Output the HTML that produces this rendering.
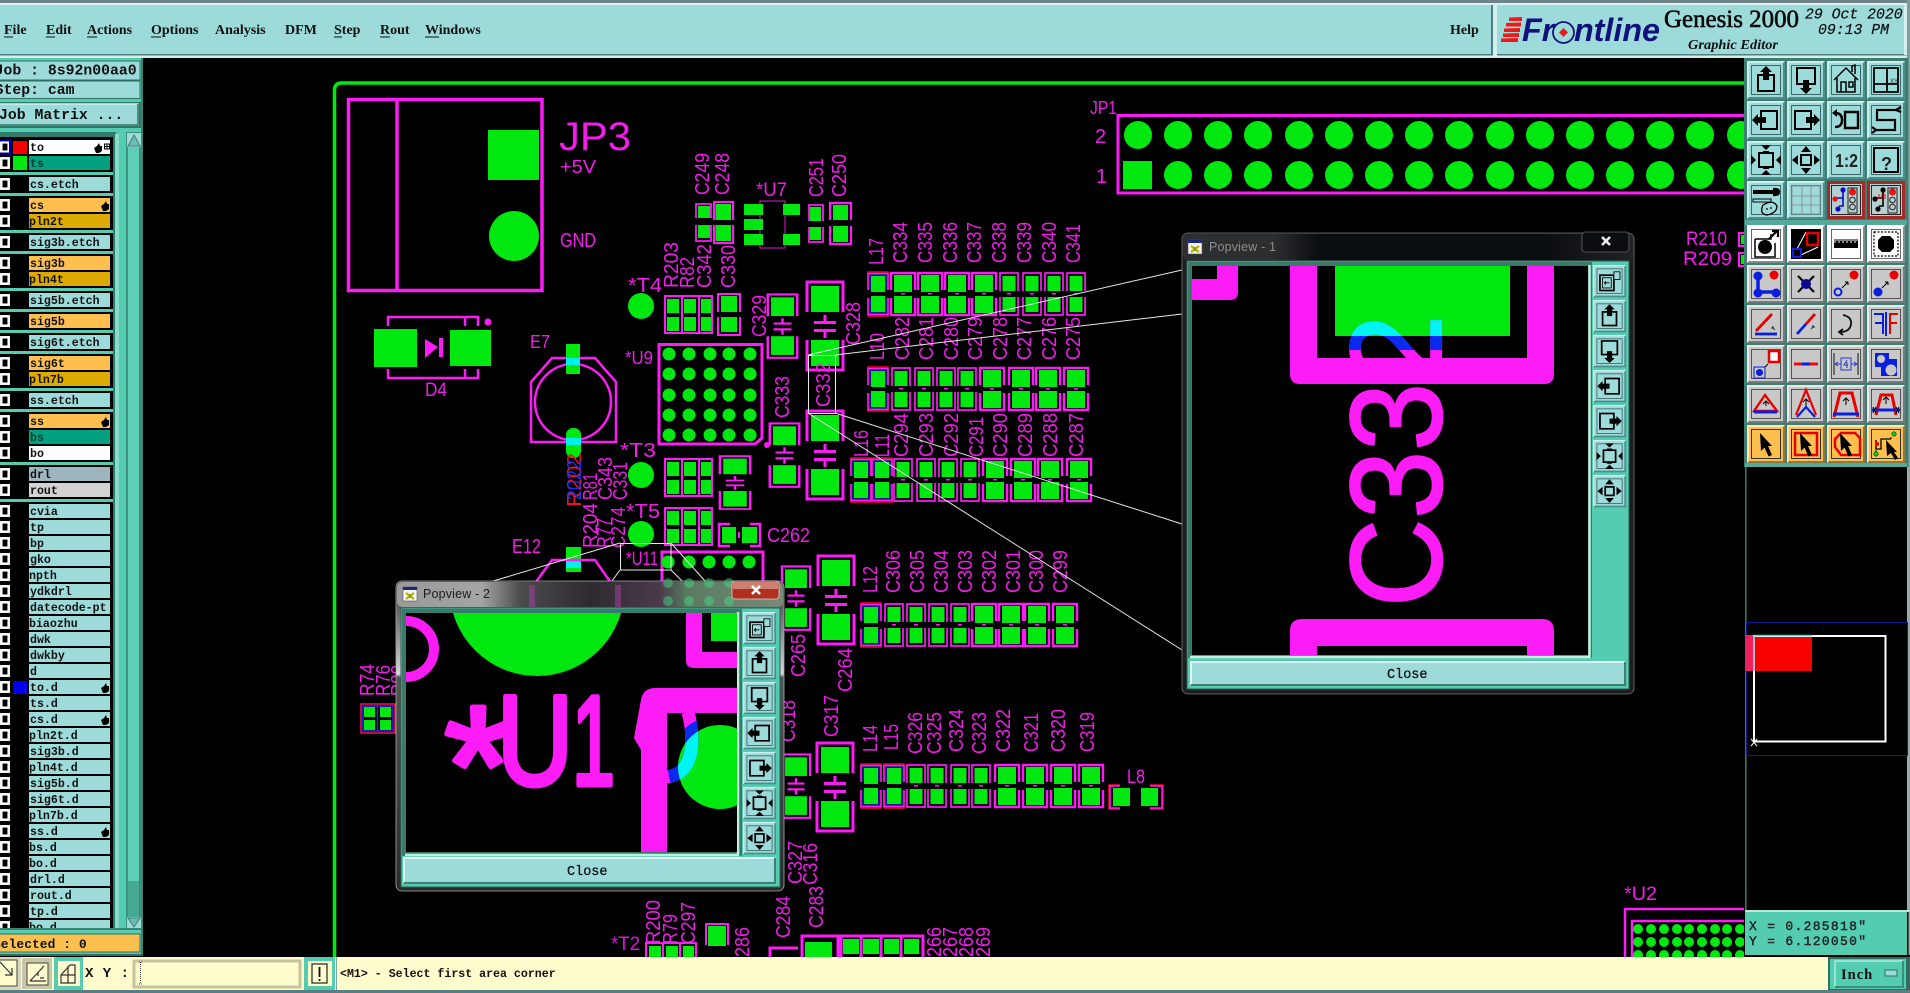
<!DOCTYPE html>
<html><head><meta charset="utf-8"><title>Genesis 2000</title>
<style>
html,body{margin:0;padding:0;background:#000;width:1910px;height:993px;overflow:hidden}
svg{display:block}
.l{font-family:"Liberation Sans",sans-serif;font-size:20px;fill:#f31ceb}
.t{font-family:"Liberation Mono",monospace;font-weight:bold;font-size:11.6px;fill:#111}
.j{font-family:"Liberation Mono",monospace;font-weight:bold;font-size:14.8px;fill:#111}
.e{font-family:"Liberation Serif",serif;font-weight:bold;font-size:14px;fill:#111}
.m{fill:#fc1cf5}.g{fill:#00e80f}
.s{fill:none;stroke:#fc1cf5}
.k{fill:none;stroke:#000;stroke-width:2}
.b{fill:#000}
</style></head><body>
<svg xmlns="http://www.w3.org/2000/svg" width="1910" height="993" viewBox="0 0 1910 993">
<defs>
<clipPath id="cv"><rect x="143" y="58" width="1601" height="899"/></clipPath>
<clipPath id="ls"><rect x="0" y="137" width="113" height="791"/></clipPath>
<clipPath id="c2"><rect x="406" y="613" width="331" height="239"/></clipPath>
<clipPath id="c1"><rect x="1192" y="266" width="396" height="389"/></clipPath>
<clipPath id="cG"><circle cx="720" cy="767" r="42"/></clipPath>
<clipPath id="cB"><circle cx="720" cy="767" r="52"/></clipPath>
<clipPath id="cy1"><rect x="1335" y="266" width="175" height="70"/></clipPath>
<clipPath id="bl1"><rect x="1192" y="336" width="396" height="14"/></clipPath>
<linearGradient id="gt2" x1="0" x2="1" y1="0" y2="0"><stop offset="0" stop-color="#9a9a9a"/><stop offset=".22" stop-color="#a4a4a4"/><stop offset=".32" stop-color="#4c4c4c"/><stop offset=".5" stop-color="#2e2a30"/><stop offset=".68" stop-color="#4a3a4a"/><stop offset=".75" stop-color="#587a60"/><stop offset="1" stop-color="#7a8a7a"/></linearGradient>
<linearGradient id="gf2" x1="0" x2="0" y1="0" y2="1"><stop offset="0" stop-color="#303030"/><stop offset=".3" stop-color="#d8d8d8"/><stop offset=".31" stop-color="#555"/><stop offset="1" stop-color="#2a2a2a"/></linearGradient>
<linearGradient id="gt1" x1="0" x2="1" y1="0" y2="0"><stop offset="0" stop-color="#2c2e30"/><stop offset=".2" stop-color="#2c2e30"/><stop offset=".3" stop-color="#0b0e10"/><stop offset=".8" stop-color="#0b0e10"/><stop offset="1" stop-color="#202225"/></linearGradient>
<text id="c332" transform="translate(1441 607) rotate(-90)" textLength="292" lengthAdjust="spacingAndGlyphs" stroke-width="2.200" stroke-linejoin="round" style="font-family:'Liberation Sans',sans-serif;font-size:130px">C332</text>

<g id="pS"><path class="s" stroke-width="1.7" d="M-9 19V1H9V19M-9 25V43H9V25"/><rect class="g" x="-6.500" y="4" width="13" height="15"/><rect class="g" x="-6.500" y="25" width="13" height="15"/><rect class="m" x="-2" y="21" width="4" height="1.500"/></g>
<g id="pB"><path class="s" stroke-width="2.400" d="M-12 18V1H12V18M-12 26V43H12V26"/><rect class="g" x="-9" y="3" width="18" height="17"/><rect class="g" x="-9" y="24" width="18" height="17"/><rect class="m" x="-2" y="21" width="4" height="1.500"/></g>
<g id="pL"><path fill="none" stroke="#f8002c" stroke-width="1.500" d="M-10 18V0H10V18M-10 26V44H10V26"/><path class="s" stroke-width="1.500" d="M-10 18V1.500H10V18M-10 26V42.500H10V26"/><path fill="none" stroke="#1a30f0" stroke-width="1" d="M-8 18V3H8V18M-8 26V41H8V26"/><rect class="g" x="-7" y="4" width="14" height="16"/><rect class="g" x="-7" y="24" width="14" height="16"/></g>
<g id="cap"><path class="s" stroke-width="3" d="M-18 32V2H18V32M-18 60V90H18V60"/><rect class="g" x="-14" y="6" width="28" height="26"/><rect class="g" x="-14" y="60" width="28" height="26"/><path class="m" d="M-1.500 35H1.500V41H11V44H-11V41H-1.500ZM-11 49H11V52H1.500V58H-1.500V52H-11Z"/></g>
<g id="pk"><path class="s" stroke-width="2" d="M1 1H48V38H1ZM18 1V38M35 1V38"/><rect class="g" x="3" y="4" width="12" height="14"/><rect class="g" x="20" y="4" width="12" height="14"/><rect class="g" x="37" y="4" width="10" height="14"/><rect class="g" x="3" y="22" width="12" height="14"/><rect class="g" x="20" y="22" width="12" height="14"/><rect class="g" x="37" y="22" width="10" height="14"/></g>

<g id="bT"><rect width="38" height="38" fill="#4d8d8c"/><path d="M0 38V0H38L36 2H2V36Z" fill="#c9efef"/><rect x="2" y="2" width="34" height="34" fill="#9ddbdb"/><rect x="4.500" y="4.500" width="29" height="29" fill="none" stroke="#3b6a6a" stroke-width="1"/></g>
<g id="bG"><rect width="38" height="38" fill="#6f7f7f"/><path d="M0 38V0H38L36 2H2V36Z" fill="#e8e8e8"/><rect x="2" y="2" width="34" height="34" fill="#c8c8c8"/><rect x="4.500" y="4.500" width="29" height="29" fill="none" stroke="#555" stroke-width="1"/></g>
<g id="bW"><rect width="38" height="38" fill="#7f8f8f"/><path d="M0 38V0H38L36 2H2V36Z" fill="#fff"/><rect x="2" y="2" width="34" height="34" fill="#fff"/><rect x="4.500" y="4.500" width="29" height="29" fill="none" stroke="#666" stroke-width="1"/></g>
<g id="bO"><rect width="38" height="38" fill="#8a7a4a"/><path d="M0 38V0H38L36 2H2V36Z" fill="#ffe6a8"/><rect x="2" y="2" width="34" height="34" fill="#fdc04f"/><rect x="4.500" y="4.500" width="29" height="29" fill="none" stroke="#333" stroke-width="1"/></g>
<g id="bR"><rect width="38" height="38" fill="#a22a2a"/><rect x="3" y="3" width="32" height="32" fill="#b5cfcf"/><rect x="4.500" y="4.500" width="29" height="29" fill="none" stroke="#222" stroke-width="1"/></g>

<g id="iUp"><path class="k" stroke-width="2.400" d="M11 14H27V30H11Z"/><path class="b" d="M19 5L25 11H22V19H16V11H13Z"/></g>
<g id="iDn"><path class="k" stroke-width="2.400" d="M10 7H28V23H10Z"/><path class="b" d="M19 33L25 27H22V19H16V27H13Z"/></g>
<g id="iLf"><path class="k" stroke-width="2.400" d="M14 10H30V28H14Z"/><path class="b" d="M5 19L11 13V16H19V22H11V25Z"/></g>
<g id="iRt"><path class="k" stroke-width="2.400" d="M8 10H24V28H8Z"/><path class="b" d="M33 19L27 13V16H19V22H27V25Z"/></g>
<g id="iFt"><rect x="12" y="12" width="14" height="14" fill="none" stroke="#000" stroke-width="2"/><path class="b" d="M14 4H24L19 9ZM14 34H24L19 29ZM4 14V24L9 19ZM34 14V24L29 19ZM16 10H22V12H16ZM16 26H22V28H16Z"/></g>
<g id="iPn"><rect x="14" y="14" width="10" height="10" fill="none" stroke="#000" stroke-width="2"/><path class="b" d="M19 5L24 11H14ZM19 33L24 27H14ZM5 19L11 14V24ZM33 19L27 14V24Z"/></g>
<g id="iWn"><rect x="8" y="12" width="16" height="18" fill="none" stroke="#000" stroke-width="2"/><rect x="11" y="15" width="10" height="12" fill="none" stroke="#000" stroke-width="1"/><rect x="24" y="8" width="7" height="9" fill="#9ddbdb" stroke="#000" stroke-width="1"/><path d="M19 21H13M15 19L13 21L15 23" fill="none" stroke="#000"/></g>
<g id="ar"><path class="b" d="M13 8L25 21H21L25 30L21.500 31.500L17.500 22.500L14 26Z"/></g>
<path id="hnd" d="M0 5L3 3L5 0L6 3H8V8L5 10H2Z" fill="#000"/>
<g id="cb"><rect x="1.300" y="2.300" width="7.400" height="9.400" fill="#000" stroke="#fff" stroke-width="2.500"/></g>
<g id="wic"><rect width="14" height="14" fill="#f4f4f4" stroke="#555" stroke-width=".6"/><rect width="14" height="3" fill="#1a2a80"/><path d="M3 6L11 12M11 6L3 12" stroke="#b8b000" stroke-width="2.200"/><path d="M7 7L7 11" stroke="#6a9a20" stroke-width="1.500"/></g>
</defs>

<rect width="1910" height="993" fill="#000"/>

<!-- PCB -->
<g clip-path="url(#cv)">
<path fill="none" stroke="#00e80f" stroke-width="3.500" d="M334.500 957V90Q334.500 83 342 83H1744"/>

<!-- JP3 -->
<path class="s" stroke-width="3.500" d="M348.500 99.500H542V290.500H348.500ZM397 99.500V290.500"/>
<rect class="g" x="488" y="130" width="51" height="50"/><circle class="g" cx="514" cy="236" r="25"/>
<text class="l" x="559" y="150" style="font-size:40px" textLength="72" lengthAdjust="spacingAndGlyphs">JP3</text>
<text class="l" x="560" y="173" style="font-size:18px" textLength="36" lengthAdjust="spacingAndGlyphs">+5V</text>
<text class="l" x="560" y="247" style="font-size:20px" textLength="36" lengthAdjust="spacingAndGlyphs">GND</text>

<!-- D4 -->
<rect class="g" x="374" y="329" width="43" height="38"/><rect class="g" x="450" y="330" width="41" height="36"/>
<path class="s" stroke-width="2.500" d="M388 326V317H478V326M465 317V326M388 369V378H478V369M465 378V369"/>
<path class="m" d="M425 339L438 347L425 358ZM439 338H443V357H439Z"/><circle class="m" cx="488" cy="322" r="3.500"/>
<text class="l" x="425" y="396" style="font-size:19px" textLength="22" lengthAdjust="spacingAndGlyphs">D4</text>

<!-- E7 -->
<path class="s" stroke-width="2.500" d="M552 358H595L616 382V442H531V382Z"/><circle class="s" cx="573" cy="402" r="38" stroke-width="2.500"/>
<rect class="g" x="566" y="344" width="14" height="30"/><rect x="566" y="358" width="14" height="7" fill="#00f0f0"/>
<rect class="g" x="566" y="428" width="15" height="30" rx="7"/><rect x="566" y="438" width="15" height="7" fill="#00f0f0"/>
<text class="l" x="530" y="348" style="font-size:18px" textLength="20" lengthAdjust="spacingAndGlyphs">E7</text>

<!-- U9 -->
<path class="s" stroke-width="3" d="M659 344.500H762V438L755 444H659Z"/>
<g class="g"><circle cx="669" cy="354" r="6.500"/><circle cx="689" cy="354" r="6.500"/><circle cx="710" cy="354" r="6.500"/><circle cx="729" cy="354" r="6.500"/><circle cx="750" cy="354" r="6.500"/><circle cx="669" cy="374" r="6.500"/><circle cx="689" cy="374" r="6.500"/><circle cx="710" cy="374" r="6.500"/><circle cx="729" cy="374" r="6.500"/><circle cx="750" cy="374" r="6.500"/><circle cx="669" cy="395" r="6.500"/><circle cx="689" cy="395" r="6.500"/><circle cx="710" cy="395" r="6.500"/><circle cx="729" cy="395" r="6.500"/><circle cx="750" cy="395" r="6.500"/><circle cx="669" cy="415" r="6.500"/><circle cx="689" cy="415" r="6.500"/><circle cx="710" cy="415" r="6.500"/><circle cx="729" cy="415" r="6.500"/><circle cx="750" cy="415" r="6.500"/><circle cx="669" cy="435" r="6.500"/><circle cx="689" cy="435" r="6.500"/><circle cx="710" cy="435" r="6.500"/><circle cx="729" cy="435" r="6.500"/><circle cx="750" cy="435" r="6.500"/>
<circle cx="641" cy="306" r="13"/><circle cx="641" cy="475" r="13"/><circle cx="641" cy="534" r="13"/></g>
<circle class="m" cx="767" cy="445" r="3"/>
<text class="l" x="625" y="364" style="font-size:18px" textLength="28" lengthAdjust="spacingAndGlyphs">*U9</text>
<text class="l" x="628" y="292" style="font-size:20px" textLength="34" lengthAdjust="spacingAndGlyphs">*T4</text>
<text class="l" x="620" y="457" style="font-size:20px" textLength="36" lengthAdjust="spacingAndGlyphs">*T3</text>
<text class="l" x="626" y="518" style="font-size:20px" textLength="34" lengthAdjust="spacingAndGlyphs">*T5</text>

<use href="#pk" x="664" y="295"/><use href="#pk" x="664" y="458"/><use href="#pk" x="664" y="507"/>

<!-- C330 pad -->
<path class="s" stroke-width="2" d="M718 312V294H740V312M718 317V335H740V317"/><rect class="g" x="721" y="296" width="16" height="16"/><rect class="g" x="721" y="317" width="16" height="15"/>

<use href="#cap" transform="translate(782.500 293) scale(.82 .72)"/>
<use href="#cap" transform="translate(825 280)"/>
<use href="#cap" transform="translate(825 409)"/>
<use href="#cap" transform="translate(784.500 422) scale(.82 .72)"/>
<use href="#cap" transform="translate(735 455) scale(.84 .6)"/>
<use href="#cap" transform="translate(836 554)"/>
<use href="#cap" transform="translate(835 741)"/>
<use href="#cap" transform="translate(796 565) scale(.78 .72)"/>
<use href="#cap" transform="translate(796 753) scale(.78 .72)"/>

<!-- C262 -->
<path class="s" stroke-width="2.500" d="M730 524H719V546H730M750 524H760V546H750"/><rect class="g" x="722" y="527" width="14" height="16"/><rect class="g" x="742" y="527" width="15" height="16"/><rect class="m" x="738" y="532" width="2" height="6"/>
<text class="l" x="767" y="542" style="font-size:20px" textLength="43" lengthAdjust="spacingAndGlyphs">C262</text>

<!-- top caps -->
<path class="s" stroke-width="1.800" d="M696 218V204H711V218M696 225V241H711V225"/><rect class="g" x="698" y="206" width="12" height="12"/><rect class="g" x="698" y="225" width="12" height="13"/>
<path class="s" stroke-width="2.200" d="M714 220V202H733V220M714 225V243H733V225"/><rect class="g" x="715.500" y="204" width="15.500" height="16"/><rect class="g" x="715.500" y="225" width="15.500" height="16"/>
<path class="s" stroke-width="1.800" d="M809 221V205H823V221M809 227V242H823V227"/><rect class="g" x="810" y="207" width="11" height="14"/><rect class="g" x="810" y="227" width="11" height="13"/>
<path class="s" stroke-width="2.200" d="M830 220V203H851V220M830 226V244H851V226"/><rect class="g" x="833" y="205" width="15" height="15"/><rect class="g" x="833" y="226" width="15" height="16"/>
<rect x="760" y="201" width="25" height="47" fill="none" stroke="#e01ad8" stroke-width="1"/>
<g class="g"><rect x="744" y="204" width="19" height="11"/><rect x="744" y="219" width="19" height="11"/><rect x="744" y="234" width="19" height="11"/><rect x="783" y="204" width="17" height="11"/><rect x="783" y="234" width="17" height="11"/></g>
<text class="l" x="756" y="196" style="font-size:19px" textLength="31" lengthAdjust="spacingAndGlyphs">*U7</text>

<use href="#pL" x="878" y="272"/><use href="#pB" x="903" y="272"/><use href="#pB" x="930" y="272"/><use href="#pB" x="957" y="272"/><use href="#pB" x="984" y="272"/><use href="#pS" x="1009" y="272"/><use href="#pS" x="1032" y="272"/><use href="#pS" x="1054" y="272"/><use href="#pS" x="1076" y="272"/>
<use href="#pL" x="878" y="367"/><use href="#pS" x="901" y="367"/><use href="#pS" x="924" y="367"/><use href="#pS" x="946" y="367"/><use href="#pS" x="967" y="367"/><use href="#pB" x="992" y="367"/><use href="#pB" x="1021" y="367"/><use href="#pB" x="1048" y="367"/><use href="#pB" x="1076" y="367"/>
<use href="#pL" x="861" y="458"/><use href="#pL" x="882" y="458"/><use href="#pS" x="903" y="458"/><use href="#pS" x="926" y="458"/><use href="#pS" x="948" y="458"/><use href="#pS" x="970" y="458"/><use href="#pB" x="995" y="458"/><use href="#pB" x="1023" y="458"/><use href="#pB" x="1050" y="458"/><use href="#pB" x="1079" y="458"/>
<use href="#pL" x="871" y="603"/><use href="#pS" x="894" y="603"/><use href="#pS" x="916" y="603"/><use href="#pS" x="938" y="603"/><use href="#pS" x="960" y="603"/><use href="#pB" x="984" y="603"/><use href="#pB" x="1011" y="603"/><use href="#pB" x="1037" y="603"/><use href="#pB" x="1065" y="603"/>
<use href="#pL" x="871" y="764"/><use href="#pL" x="894" y="764"/><use href="#pS" x="916" y="764"/><use href="#pS" x="937" y="764"/><use href="#pS" x="960" y="764"/><use href="#pS" x="981" y="764"/><use href="#pB" x="1007" y="764"/><use href="#pB" x="1035" y="764"/><use href="#pB" x="1063" y="764"/><use href="#pB" x="1091" y="764"/>

<!-- L8 -->
<path fill="none" stroke="#f8002c" stroke-width="1.500" d="M1120 785H1109V809H1120M1150 785H1163V809H1150"/><path class="s" stroke-width="1.500" d="M1120 786H1110V808H1120M1150 786H1162V808H1150"/>
<rect class="g" x="1113" y="788" width="17" height="18"/><rect class="g" x="1141" y="788" width="17" height="18"/>
<text class="l" x="1127" y="783" style="font-size:19px" textLength="18" lengthAdjust="spacingAndGlyphs">L8</text>

<!-- labels rotated -->
<g class="l">
<text transform="translate(709 195)rotate(-90)" textLength="42" lengthAdjust="spacingAndGlyphs">C249</text>
<text transform="translate(729 195)rotate(-90)" textLength="42" lengthAdjust="spacingAndGlyphs">C248</text>
<text transform="translate(823 197)rotate(-90)" textLength="39" lengthAdjust="spacingAndGlyphs">C251</text>
<text transform="translate(846 197)rotate(-90)" textLength="43" lengthAdjust="spacingAndGlyphs">C250</text>
<text transform="translate(678 288)rotate(-90)" textLength="46" lengthAdjust="spacingAndGlyphs">R203</text>
<text transform="translate(694 288)rotate(-90)" textLength="31" lengthAdjust="spacingAndGlyphs">R82</text>
<text transform="translate(711 288)rotate(-90)" textLength="44" lengthAdjust="spacingAndGlyphs">C342</text>
<text transform="translate(735 288)rotate(-90)" textLength="43" lengthAdjust="spacingAndGlyphs">C330</text>
<text transform="translate(766 337)rotate(-90)" textLength="42" lengthAdjust="spacingAndGlyphs">C329</text>
<text transform="translate(860 345)rotate(-90)" textLength="43" lengthAdjust="spacingAndGlyphs">C328</text>
<text transform="translate(789 418)rotate(-90)" textLength="42" lengthAdjust="spacingAndGlyphs">C333</text>
<text transform="translate(830 407)rotate(-90)" textLength="44" lengthAdjust="spacingAndGlyphs">C332</text>
<text transform="translate(883 265)rotate(-90)" textLength="27" lengthAdjust="spacingAndGlyphs">L17</text>
<text transform="translate(907 263)rotate(-90)" textLength="41" lengthAdjust="spacingAndGlyphs">C334</text>
<text transform="translate(932 263)rotate(-90)" textLength="41" lengthAdjust="spacingAndGlyphs">C335</text>
<text transform="translate(957 263)rotate(-90)" textLength="41" lengthAdjust="spacingAndGlyphs">C336</text>
<text transform="translate(981 263)rotate(-90)" textLength="41" lengthAdjust="spacingAndGlyphs">C337</text>
<text transform="translate(1006 263)rotate(-90)" textLength="41" lengthAdjust="spacingAndGlyphs">C338</text>
<text transform="translate(1031 263)rotate(-90)" textLength="41" lengthAdjust="spacingAndGlyphs">C339</text>
<text transform="translate(1056 263)rotate(-90)" textLength="41" lengthAdjust="spacingAndGlyphs">C340</text>
<text transform="translate(1080 263)rotate(-90)" textLength="39" lengthAdjust="spacingAndGlyphs">C341</text>
<text transform="translate(884 360)rotate(-90)" textLength="27" lengthAdjust="spacingAndGlyphs">L10</text>
<text transform="translate(909 360)rotate(-90)" textLength="43" lengthAdjust="spacingAndGlyphs">C282</text>
<text transform="translate(933 360)rotate(-90)" textLength="43" lengthAdjust="spacingAndGlyphs">C281</text>
<text transform="translate(958 360)rotate(-90)" textLength="43" lengthAdjust="spacingAndGlyphs">C280</text>
<text transform="translate(982 360)rotate(-90)" textLength="43" lengthAdjust="spacingAndGlyphs">C279</text>
<text transform="translate(1007 360)rotate(-90)" textLength="43" lengthAdjust="spacingAndGlyphs">C278</text>
<text transform="translate(1031 360)rotate(-90)" textLength="43" lengthAdjust="spacingAndGlyphs">C277</text>
<text transform="translate(1056 360)rotate(-90)" textLength="43" lengthAdjust="spacingAndGlyphs">C276</text>
<text transform="translate(1080 360)rotate(-90)" textLength="43" lengthAdjust="spacingAndGlyphs">C275</text>
<text transform="translate(868 457)rotate(-90)" textLength="27" lengthAdjust="spacingAndGlyphs">L16</text>
<text transform="translate(889 457)rotate(-90)" textLength="23" lengthAdjust="spacingAndGlyphs">L11</text>
<text transform="translate(908 457)rotate(-90)" textLength="44" lengthAdjust="spacingAndGlyphs">C294</text>
<text transform="translate(933 457)rotate(-90)" textLength="44" lengthAdjust="spacingAndGlyphs">C293</text>
<text transform="translate(958 457)rotate(-90)" textLength="44" lengthAdjust="spacingAndGlyphs">C292</text>
<text transform="translate(983 457)rotate(-90)" textLength="40" lengthAdjust="spacingAndGlyphs">C291</text>
<text transform="translate(1007 457)rotate(-90)" textLength="44" lengthAdjust="spacingAndGlyphs">C290</text>
<text transform="translate(1032 457)rotate(-90)" textLength="44" lengthAdjust="spacingAndGlyphs">C289</text>
<text transform="translate(1057 457)rotate(-90)" textLength="44" lengthAdjust="spacingAndGlyphs">C288</text>
<text transform="translate(1083 457)rotate(-90)" textLength="44" lengthAdjust="spacingAndGlyphs">C287</text>
<text transform="translate(877 593)rotate(-90)" textLength="27" lengthAdjust="spacingAndGlyphs">L12</text>
<text transform="translate(900 593)rotate(-90)" textLength="43" lengthAdjust="spacingAndGlyphs">C306</text>
<text transform="translate(924 593)rotate(-90)" textLength="43" lengthAdjust="spacingAndGlyphs">C305</text>
<text transform="translate(948 593)rotate(-90)" textLength="43" lengthAdjust="spacingAndGlyphs">C304</text>
<text transform="translate(972 593)rotate(-90)" textLength="43" lengthAdjust="spacingAndGlyphs">C303</text>
<text transform="translate(996 593)rotate(-90)" textLength="43" lengthAdjust="spacingAndGlyphs">C302</text>
<text transform="translate(1020 593)rotate(-90)" textLength="43" lengthAdjust="spacingAndGlyphs">C301</text>
<text transform="translate(1043 593)rotate(-90)" textLength="43" lengthAdjust="spacingAndGlyphs">C300</text>
<text transform="translate(1067 593)rotate(-90)" textLength="43" lengthAdjust="spacingAndGlyphs">C299</text>
<text transform="translate(852 692)rotate(-90)" textLength="44" lengthAdjust="spacingAndGlyphs">C264</text>
<text transform="translate(805 677)rotate(-90)" textLength="43" lengthAdjust="spacingAndGlyphs">C265</text>
<text transform="translate(795 742)rotate(-90)" textLength="42" lengthAdjust="spacingAndGlyphs">C318</text>
<text transform="translate(838 737)rotate(-90)" textLength="42" lengthAdjust="spacingAndGlyphs">C317</text>
<text transform="translate(877 752)rotate(-90)" textLength="27" lengthAdjust="spacingAndGlyphs">L14</text>
<text transform="translate(898 750)rotate(-90)" textLength="26" lengthAdjust="spacingAndGlyphs">L15</text>
<text transform="translate(922 754)rotate(-90)" textLength="42" lengthAdjust="spacingAndGlyphs">C326</text>
<text transform="translate(941 754)rotate(-90)" textLength="42" lengthAdjust="spacingAndGlyphs">C325</text>
<text transform="translate(963 752)rotate(-90)" textLength="43" lengthAdjust="spacingAndGlyphs">C324</text>
<text transform="translate(986 754)rotate(-90)" textLength="42" lengthAdjust="spacingAndGlyphs">C323</text>
<text transform="translate(1010 752)rotate(-90)" textLength="43" lengthAdjust="spacingAndGlyphs">C322</text>
<text transform="translate(1038 752)rotate(-90)" textLength="39" lengthAdjust="spacingAndGlyphs">C321</text>
<text transform="translate(1065 752)rotate(-90)" textLength="43" lengthAdjust="spacingAndGlyphs">C320</text>
<text transform="translate(1094 752)rotate(-90)" textLength="40" lengthAdjust="spacingAndGlyphs">C319</text>
<text transform="translate(802 884)rotate(-90)" textLength="43" lengthAdjust="spacingAndGlyphs">C327</text>
<text transform="translate(817 885)rotate(-90)" textLength="42" lengthAdjust="spacingAndGlyphs">C316</text>
<text transform="translate(823 928)rotate(-90)" textLength="42" lengthAdjust="spacingAndGlyphs">C283</text>
<text transform="translate(790 938)rotate(-90)" textLength="42" lengthAdjust="spacingAndGlyphs">C284</text>
<text transform="translate(941 957)rotate(-90)" textLength="30" lengthAdjust="spacingAndGlyphs">266</text>
<text transform="translate(957 957)rotate(-90)" textLength="30" lengthAdjust="spacingAndGlyphs">267</text>
<text transform="translate(973 957)rotate(-90)" textLength="30" lengthAdjust="spacingAndGlyphs">268</text>
<text transform="translate(990 957)rotate(-90)" textLength="30" lengthAdjust="spacingAndGlyphs">269</text>
<text transform="translate(749 957)rotate(-90)" textLength="30" lengthAdjust="spacingAndGlyphs">286</text>
<text transform="translate(597 500)rotate(-90)" textLength="27" lengthAdjust="spacingAndGlyphs">R81</text>
<text transform="translate(612 500)rotate(-90)" textLength="43" lengthAdjust="spacingAndGlyphs">C343</text>
<text transform="translate(627 500)rotate(-90)" textLength="38" lengthAdjust="spacingAndGlyphs">C331</text>
<text transform="translate(597 548)rotate(-90)" textLength="45" lengthAdjust="spacingAndGlyphs">R204</text>
<text transform="translate(611 548)rotate(-90)" textLength="30" lengthAdjust="spacingAndGlyphs">R77</text>
<text transform="translate(625 548)rotate(-90)" textLength="41" lengthAdjust="spacingAndGlyphs">C274</text>
<text transform="translate(374 696)rotate(-90)" textLength="32" lengthAdjust="spacingAndGlyphs">R74</text>
<text transform="translate(390 696)rotate(-90)" textLength="31" lengthAdjust="spacingAndGlyphs">R76</text>
<text transform="translate(405 696)rotate(-90)" textLength="31" lengthAdjust="spacingAndGlyphs">R80</text>
<text transform="translate(660 944)rotate(-90)" textLength="44" lengthAdjust="spacingAndGlyphs">R200</text>
<text transform="translate(677 944)rotate(-90)" textLength="30" lengthAdjust="spacingAndGlyphs">R79</text>
<text transform="translate(695 944)rotate(-90)" textLength="42" lengthAdjust="spacingAndGlyphs">C297</text>
</g>
<text class="l" transform="translate(581 507)rotate(-90)" textLength="54" lengthAdjust="spacingAndGlyphs" style="fill:#f0102a">R202</text>
<text class="l" transform="translate(581 500)rotate(-90)" textLength="40" lengthAdjust="spacingAndGlyphs" style="fill:#1a30f0">2022</text>

<text class="l" x="512" y="553" style="font-size:20px" textLength="29" lengthAdjust="spacingAndGlyphs">E12</text>
<rect class="g" x="566" y="547" width="15" height="25"/><rect x="566" y="560" width="15" height="8" fill="#00f0f0"/>
<path class="s" stroke-width="2.500" d="M530 590L552 560H595L616 590"/>
<text class="l" x="626" y="565" style="font-size:19px" textLength="32" lengthAdjust="spacingAndGlyphs">*U11</text>
<path class="s" stroke-width="3" d="M662 600V552H763V600"/>
<g class="g"><circle cx="668" cy="562" r="6.500"/><circle cx="689" cy="562" r="6.500"/><circle cx="709" cy="562" r="6.500"/><circle cx="729" cy="562" r="6.500"/><circle cx="749" cy="562" r="6.500"/></g>

<!-- R74 pack -->
<rect x="361" y="704" width="34" height="29" fill="none" stroke="#f0105a" stroke-width="1.500"/><path fill="none" stroke="#3020e8" stroke-width="1.500" d="M363 706H393V731H363ZM377.500 706V731"/>
<g class="g"><rect x="364" y="707" width="11" height="10"/><rect x="364" y="720" width="11" height="10"/><rect x="380" y="707" width="11" height="10"/><rect x="380" y="720" width="11" height="10"/></g>

<!-- JP1 -->
<path class="s" stroke-width="3" d="M1750 115.500H1118V193H1750"/>
<text class="l" x="1090" y="114" style="font-size:18px" textLength="27" lengthAdjust="spacingAndGlyphs">JP1</text>
<text class="l" x="1095" y="143" style="font-size:20px">2</text><text class="l" x="1096" y="183" style="font-size:20px">1</text>
<rect class="g" x="1123" y="161" width="29" height="28"/>
<g class="g"><circle cx="1138" cy="135" r="14"/><circle cx="1178" cy="135" r="14"/><circle cx="1218" cy="135" r="14"/><circle cx="1258" cy="135" r="14"/><circle cx="1299" cy="135" r="14"/><circle cx="1339" cy="135" r="14"/><circle cx="1379" cy="135" r="14"/><circle cx="1419" cy="135" r="14"/><circle cx="1459" cy="135" r="14"/><circle cx="1500" cy="135" r="14"/><circle cx="1540" cy="135" r="14"/><circle cx="1580" cy="135" r="14"/><circle cx="1620" cy="135" r="14"/><circle cx="1660" cy="135" r="14"/><circle cx="1700" cy="135" r="14"/><circle cx="1741" cy="135" r="14"/>
<circle cx="1178" cy="175" r="14"/><circle cx="1218" cy="175" r="14"/><circle cx="1258" cy="175" r="14"/><circle cx="1299" cy="175" r="14"/><circle cx="1339" cy="175" r="14"/><circle cx="1379" cy="175" r="14"/><circle cx="1419" cy="175" r="14"/><circle cx="1459" cy="175" r="14"/><circle cx="1500" cy="175" r="14"/><circle cx="1540" cy="175" r="14"/><circle cx="1580" cy="175" r="14"/><circle cx="1620" cy="175" r="14"/><circle cx="1660" cy="175" r="14"/><circle cx="1700" cy="175" r="14"/><circle cx="1741" cy="175" r="14"/></g>

<!-- R210 -->
<text class="l" x="1686" y="245" style="font-size:19px" textLength="41" lengthAdjust="spacingAndGlyphs">R210</text>
<text class="l" x="1683" y="265" style="font-size:19px" textLength="49" lengthAdjust="spacingAndGlyphs">R209</text>
<path class="s" stroke-width="2" d="M1744 233H1739V246H1744M1744 253H1739V266H1744"/><rect class="g" x="1741" y="235" width="3" height="9"/><rect class="g" x="1741" y="255" width="3" height="9"/>

<!-- U2 -->
<text class="l" x="1624" y="900" style="font-size:19px" textLength="33" lengthAdjust="spacingAndGlyphs">*U2</text>
<path class="s" stroke-width="2.500" d="M1744 909H1625V957M1744 921H1632V957"/>
<g class="g"><circle cx="1638" cy="929" r="5"/><circle cx="1651" cy="929" r="5"/><circle cx="1664" cy="929" r="5"/><circle cx="1677" cy="929" r="5"/><circle cx="1689" cy="929" r="5"/><circle cx="1702" cy="929" r="5"/><circle cx="1715" cy="929" r="5"/><circle cx="1727" cy="929" r="5"/><circle cx="1740" cy="929" r="5"/><circle cx="1638" cy="942" r="5"/><circle cx="1651" cy="942" r="5"/><circle cx="1664" cy="942" r="5"/><circle cx="1677" cy="942" r="5"/><circle cx="1689" cy="942" r="5"/><circle cx="1702" cy="942" r="5"/><circle cx="1715" cy="942" r="5"/><circle cx="1727" cy="942" r="5"/><circle cx="1740" cy="942" r="5"/><circle cx="1638" cy="955" r="5"/><circle cx="1651" cy="955" r="5"/><circle cx="1664" cy="955" r="5"/><circle cx="1677" cy="955" r="5"/><circle cx="1689" cy="955" r="5"/><circle cx="1702" cy="955" r="5"/><circle cx="1715" cy="955" r="5"/><circle cx="1727" cy="955" r="5"/><circle cx="1740" cy="955" r="5"/></g>

<!-- bottom row -->
<text class="l" x="611" y="950" style="font-size:19px;fill:#e010e0" textLength="29" lengthAdjust="spacingAndGlyphs">*T2</text>
<path class="s" stroke-width="2" d="M646 957V943H696V957M663 943V957M680 943V957"/><rect class="g" x="649" y="946" width="12" height="11"/><rect class="g" x="666" y="946" width="12" height="11"/><rect class="g" x="683" y="946" width="11" height="11"/>
<rect class="g" x="708" y="926" width="18" height="20"/><path class="s" stroke-width="2" d="M706 945V924H728V945"/>
<path class="s" stroke-width="3" d="M770 957V948H798M802 957V936H838V957M841 957V936H923V957M861 936V957M881 936V957M901 936V957"/>
<rect class="g" x="805" y="942" width="27" height="15"/><rect class="g" x="843" y="939" width="16" height="15"/><rect class="g" x="863" y="939" width="16" height="15"/><rect class="g" x="884" y="939" width="15" height="15"/><rect class="g" x="904" y="939" width="15" height="15"/>

<!-- leaders -->
<rect x="808.500" y="355.500" width="27" height="58" fill="none" stroke="#e8e8e8" stroke-width="1"/>
<path fill="none" stroke="#e8e8e8" stroke-width="1" d="M808 355L1182 270M835 355L1182 314M835 413L1182 524M808 413L1182 650"/>
<path fill="none" stroke="#e8e8e8" stroke-width="1" d="M620.500 543.500H671V570H620.500ZM620 543L480 585M671 543L705 581M620 570L612 581M671 570L682 581"/>
</g>

<!-- Popview 2 -->
<rect x="396" y="581" width="388" height="310" rx="6" fill="url(#gf2)" stroke="#aaa" stroke-width=".8"/>
<rect x="397" y="582" width="386" height="25" rx="5" fill="url(#gt2)"/>
<g opacity=".45" fill="#44dd88"><circle cx="668" cy="583" r="5"/><circle cx="689" cy="583" r="5"/><circle cx="709" cy="583" r="5"/><circle cx="729" cy="583" r="5"/><circle cx="668" cy="601" r="5"/><circle cx="689" cy="601" r="5"/><circle cx="709" cy="601" r="5"/><circle cx="729" cy="601" r="5"/></g>
<path d="M532 607V585M618 607V585" stroke="#a040a0" stroke-width="6" opacity=".55"/>
<rect x="732" y="581" width="47" height="18" rx="3" fill="#b03020" stroke="#d8d0d0" stroke-width=".8"/><rect x="733" y="582" width="45" height="7" fill="#d08070"/>
<path d="M752 586L760 594M760 586L752 594" stroke="#fff" stroke-width="2.600"/>
<use href="#wic" x="403" y="587"/>
<text x="423" y="598" style="font-family:'Liberation Sans',sans-serif;font-size:12.500px;fill:#1c1c1c" textLength="67" lengthAdjust="spacing">Popview - 2</text>
<rect x="401" y="608" width="379" height="279" fill="#53ccb0" stroke="#2f5f55" stroke-width="1"/>
<rect x="402" y="609" width="340" height="247" fill="#3a7a6a"/>
<path d="M738 612V855H405" fill="none" stroke="#c2f0e0" stroke-width="2.500"/>
<rect x="406" y="613" width="331" height="239" fill="#000"/>
<g clip-path="url(#c2)">
<circle class="g" cx="537" cy="588.500" r="87.500"/>
<path class="s" stroke-width="10" d="M406 621A28 28 0 0 1 406 677"/>
<path class="m" d="M686 613H702V652H737V668H694Q686 668 686 660Z"/><rect class="g" x="711" y="613" width="26" height="28"/>
<circle class="g" cx="720" cy="767" r="42"/>
<path class="m" d="M641 852V750L634 738L641 700Q643 688 655 688H737V713H667V852Z"/>
<path class="s" stroke-width="13" d="M688 712Q693 730 691.500 748Q688 775 666 777"/>
<path d="M688 712Q693 730 691.500 748Q688 775 666 777" fill="none" stroke="#0a2af0" stroke-width="13" clip-path="url(#cB)"/>
<path d="M688 712Q693 730 691.500 748Q688 775 666 777" fill="none" stroke="#00f4f4" stroke-width="13" clip-path="url(#cG)"/>
<text x="444" y="824" textLength="68" lengthAdjust="spacingAndGlyphs" style="font-family:'Liberation Sans',sans-serif;font-size:170px;fill:#fc1cf5;stroke:#fc1cf5;stroke-width:5;stroke-linejoin:round">*</text>
<text x="497" y="785" textLength="76" lengthAdjust="spacingAndGlyphs" style="font-family:'Liberation Sans',sans-serif;font-size:128px;fill:#fc1cf5;stroke:#fc1cf5;stroke-width:5;stroke-linejoin:round">U</text>
<text x="572" y="785" textLength="43" lengthAdjust="spacingAndGlyphs" style="font-family:'Liberation Sans',sans-serif;font-size:128px;fill:#fc1cf5;stroke:#fc1cf5;stroke-width:5;stroke-linejoin:round">1</text>
</g>
<g transform="translate(743 612) scale(.87 .85)"><use href="#bT"/><use href="#iWn"/></g>
<g transform="translate(743 647) scale(.87 .85)"><use href="#bT"/><use href="#iUp"/></g>
<g transform="translate(743 682) scale(.87 .85)"><use href="#bT"/><use href="#iDn"/></g>
<g transform="translate(743 717) scale(.87 .85)"><use href="#bT"/><use href="#iLf"/></g>
<g transform="translate(743 752) scale(.87 .85)"><use href="#bT"/><use href="#iRt"/></g>
<g transform="translate(743 787) scale(.87 .85)"><use href="#bT"/><use href="#iFt"/></g>
<g transform="translate(743 822) scale(.87 .85)"><use href="#bT"/><use href="#iPn"/></g>
<rect x="404" y="858" width="371" height="25" fill="#9ddbdb"/><path d="M404 883V858H775" fill="none" stroke="#dff6f2" stroke-width="2"/><path d="M404 883H775V858" fill="none" stroke="#3f7f72" stroke-width="2"/>
<text class="t" x="567" y="875" style="font-weight:normal;font-size:13.500px;stroke:#111;stroke-width:.3">Close</text>

<!-- Popview 1 -->
<rect x="1182" y="233" width="452" height="461" rx="6" fill="#1c1e20" stroke="#777" stroke-width=".8"/>
<rect x="1183" y="234" width="450" height="26" rx="5" fill="url(#gt1)"/>
<rect x="1582" y="232" width="47" height="20" rx="3" fill="#0b0e10" stroke="#666" stroke-width=".8"/>
<path d="M1602 237L1610 245M1610 237L1602 245" stroke="#eee" stroke-width="2.600"/>
<use href="#wic" x="1188" y="240"/>
<text x="1209" y="251" style="font-family:'Liberation Sans',sans-serif;font-size:12.500px;fill:#8a8f90" textLength="67" lengthAdjust="spacing">Popview - 1</text>
<rect x="1187" y="261" width="442" height="428" fill="#53ccb0" stroke="#2f5f55" stroke-width="1"/>
<rect x="1188" y="262" width="404" height="396" fill="#3a7a6a"/>
<path d="M1589.500 265V657H1190" fill="none" stroke="#c2f0e0" stroke-width="2.500"/>
<rect x="1192" y="266" width="396" height="389" fill="#000"/>
<g clip-path="url(#c1)">
<path class="m" d="M1192 279H1217V266H1238V292Q1238 300 1230 300H1192Z"/>
<rect class="g" x="1335" y="266" width="175" height="70"/>
<use href="#c332" fill="#fc1cf5" stroke="#fc1cf5"/>
<g clip-path="url(#bl1)"><use href="#c332" fill="#0a2af0" stroke="#0a2af0"/></g>
<g clip-path="url(#cy1)"><use href="#c332" fill="#00f4f4" stroke="#00f4f4"/></g>
<path class="m" d="M1290 266H1317V358H1527V266H1554V374Q1554 384 1544 384H1300Q1290 384 1290 374Z"/>
<path class="m" d="M1290 655V631Q1290 619 1302 619H1542Q1554 619 1554 631V655H1527V646H1317V655Z"/>
</g>
<g transform="translate(1593 265) scale(.87 .85)"><use href="#bT"/><use href="#iWn"/></g>
<g transform="translate(1593 300) scale(.87 .85)"><use href="#bT"/><use href="#iUp"/></g>
<g transform="translate(1593 335) scale(.87 .85)"><use href="#bT"/><use href="#iDn"/></g>
<g transform="translate(1593 370) scale(.87 .85)"><use href="#bT"/><use href="#iLf"/></g>
<g transform="translate(1593 405) scale(.87 .85)"><use href="#bT"/><use href="#iRt"/></g>
<g transform="translate(1593 440) scale(.87 .85)"><use href="#bT"/><use href="#iFt"/></g>
<g transform="translate(1593 475) scale(.87 .85)"><use href="#bT"/><use href="#iPn"/></g>
<rect x="1191" y="662" width="434" height="23" fill="#9ddbdb"/><path d="M1191 685V662H1625" fill="none" stroke="#dff6f2" stroke-width="2"/><path d="M1191 685H1625V662" fill="none" stroke="#3f7f72" stroke-width="2"/>
<text class="t" x="1387" y="678" style="font-weight:normal;font-size:13.500px;stroke:#111;stroke-width:.3">Close</text>

<!-- top bar -->
<rect y="0" width="1910" height="3" fill="#6f8488"/><rect y="3" width="1910" height="2" fill="#dff2f2"/>
<rect y="5" width="1910" height="49" fill="#9ddbdb"/>
<rect y="54" width="1910" height="1.500" fill="#547f80"/><rect y="55.500" width="1910" height="2.500" fill="#d2f0ee"/>
<text class="e" x="4" y="34">File</text><rect x="4" y="36.500" width="9" height="1" fill="#111"/>
<text class="e" x="46" y="34">Edit</text><rect x="46" y="36.500" width="9" height="1" fill="#111"/>
<text class="e" x="87" y="34">Actions</text><rect x="87" y="36.500" width="10" height="1" fill="#111"/>
<text class="e" x="151" y="34">Options</text><rect x="151" y="36.500" width="10" height="1" fill="#111"/>
<text class="e" x="215" y="34">Analysis</text>
<text class="e" x="285" y="34">DFM</text>
<text class="e" x="334" y="34">Step</text><rect x="334" y="36.500" width="8" height="1" fill="#111"/>
<text class="e" x="380" y="34">Rout</text><rect x="380" y="36.500" width="10" height="1" fill="#111"/>
<text class="e" x="425" y="34">Windows</text><rect x="425" y="36.500" width="14" height="1" fill="#111"/>
<text class="e" x="1450" y="34">Help</text>
<rect x="1491" y="5" width="2" height="50" fill="#4f7f80"/><rect x="1493" y="3" width="4" height="55" fill="#d2f0ee"/>
<rect x="1904" y="3" width="3" height="52" fill="#d2f0ee"/><rect x="1907" y="0" width="3" height="58" fill="#7f9a9a"/>
<path fill="#ee1a1a" d="M1509 17.500L1522 17V21H1509ZM1506 23L1521 22.500V26.500H1506ZM1504 28.500L1520 28V32H1504ZM1503 33.500L1519 33V37H1503ZM1501 38.500L1518 38V42H1501Z"/>
<text x="1522" y="41" textLength="138" lengthAdjust="spacingAndGlyphs" style="font-family:'Liberation Sans',sans-serif;font-weight:bold;font-style:italic;font-size:32px;fill:#11117c">Frontline</text>
<circle cx="1563.500" cy="32.500" r="10.500" fill="#9ddbdb" stroke="#11117c" stroke-width="1.800"/><path d="M1563.500 28L1568 32.500L1563.500 37L1559 32.500Z" fill="#ee1a1a"/>
<text x="1664" y="27" textLength="135" lengthAdjust="spacingAndGlyphs" style="font-family:'Liberation Serif',serif;font-size:25px;fill:#0a0a0a;stroke:#0a0a0a;stroke-width:.6">Genesis 2000</text>
<text x="1688" y="49" textLength="90" lengthAdjust="spacingAndGlyphs" style="font-family:'Liberation Serif',serif;font-weight:bold;font-style:italic;font-size:14px;fill:#111">Graphic Editor</text>
<text x="1805" y="18.500" style="font-family:'Liberation Mono',monospace;font-style:italic;font-size:14.800px;fill:#111;stroke:#111;stroke-width:.2">29 Oct 2020</text>
<text x="1818" y="34" style="font-family:'Liberation Mono',monospace;font-style:italic;font-size:14.800px;fill:#111;stroke:#111;stroke-width:.2">09:13 PM</text>

<!-- left panel -->
<rect x="0" y="58" width="143" height="898" fill="#53ccb0"/>
<rect x="141" y="58" width="2" height="898" fill="#3f8274"/>
<rect x="-2" y="61" width="142" height="19" fill="#9ddbdb" stroke="#2f6f62"/>
<rect x="-2" y="81" width="142" height="17.500" fill="#9ddbdb" stroke="#2f6f62"/>
<rect x="0" y="102" width="141" height="26" fill="#2f7a6a"/>
<rect x="-2" y="104" width="140" height="20" fill="#9ddbdb"/><path d="M0 104H138V124" fill="none" stroke="#d2f0ee" stroke-width="1.500"/><path d="M138 104V125H0" fill="none" stroke="#4f8a84" stroke-width="2"/>
<text class="j" x="-5.400" y="74.500">Job : 8s92n00aa0</text>
<text class="j" x="-5.400" y="94">Step: cam</text>
<text class="j" x="-1" y="119">Job Matrix ...</text>
<rect x="0" y="132" width="116" height="5" fill="#2f7a6a"/>
<rect x="0" y="137" width="113" height="791" fill="#000"/>
<rect x="113" y="132" width="2" height="797" fill="#2f7a6a"/>
<rect x="115" y="134" width="4" height="795" fill="#86dcc6"/>
<rect x="119" y="134" width="7" height="795" fill="#53ccb0"/>
<rect x="126" y="132" width="16" height="797" fill="#3f8f7f"/>
<rect x="128" y="147" width="11" height="734" fill="#5ecfb6"/><rect x="128" y="881" width="11" height="36" fill="#46aa92"/>
<path d="M127 147V133H141V147Z" fill="#9ddbdb"/><path d="M134 135L140 146H128Z" fill="#6dbcb6" stroke="#3f7f72"/>
<path d="M127 917H141V928H127Z" fill="#9ddbdb"/><path d="M134 927L140 918H128Z" fill="#6dbcb6" stroke="#3f7f72"/>

<g clip-path="url(#ls)">
<g fill="#53ccb0"><rect y="172" width="113" height="3"/><rect y="193" width="113" height="3"/><rect y="230" width="113" height="3"/><rect y="251" width="113" height="3"/><rect y="288" width="113" height="3"/><rect y="309" width="113" height="3"/><rect y="330" width="113" height="3"/><rect y="351" width="113" height="3"/><rect y="388" width="113" height="3"/><rect y="409" width="113" height="3"/><rect y="462" width="113" height="3"/><rect y="499" width="113" height="3"/></g>
<rect x="13" y="141" width="14" height="13" fill="#f80000"/><rect x="13" y="156" width="14" height="14" fill="#00e80f"/><rect x="13" y="681" width="14" height="13" fill="#0000f0"/>
<g fill="#9ddbdb"><rect x="29" y="177" width="81" height="14"/><rect x="29" y="235" width="81" height="14"/><rect x="29" y="293" width="81" height="14"/><rect x="29" y="335" width="81" height="14"/><rect x="29" y="393" width="81" height="14"/>
<rect x="29" y="504" width="81" height="14"/><rect x="29" y="520" width="81" height="14"/><rect x="29" y="536" width="81" height="14"/><rect x="29" y="552" width="81" height="14"/><rect x="29" y="568" width="81" height="14"/><rect x="29" y="584" width="81" height="14"/><rect x="29" y="600" width="81" height="14"/><rect x="29" y="616" width="81" height="14"/><rect x="29" y="632" width="81" height="14"/><rect x="29" y="648" width="81" height="14"/><rect x="29" y="664" width="81" height="14"/><rect x="29" y="680" width="81" height="14"/><rect x="29" y="696" width="81" height="14"/><rect x="29" y="712" width="81" height="14"/><rect x="29" y="728" width="81" height="14"/><rect x="29" y="744" width="81" height="14"/><rect x="29" y="760" width="81" height="14"/><rect x="29" y="776" width="81" height="14"/><rect x="29" y="792" width="81" height="14"/><rect x="29" y="808" width="81" height="14"/><rect x="29" y="824" width="81" height="14"/><rect x="29" y="840" width="81" height="14"/><rect x="29" y="856" width="81" height="14"/><rect x="29" y="872" width="81" height="14"/><rect x="29" y="888" width="81" height="14"/><rect x="29" y="904" width="81" height="14"/><rect x="29" y="920" width="81" height="14"/></g>
<g fill="#fdc04f"><rect x="29" y="198" width="81" height="14"/><rect x="29" y="256" width="81" height="14"/><rect x="29" y="314" width="81" height="14"/><rect x="29" y="356" width="81" height="14"/><rect x="29" y="414" width="81" height="14"/></g>
<g fill="#dcaa00"><rect x="29" y="214" width="81" height="14"/><rect x="29" y="272" width="81" height="14"/><rect x="29" y="372" width="81" height="14"/></g>
<g fill="#00a080"><rect x="29" y="156" width="81" height="14"/><rect x="29" y="430" width="81" height="14"/></g>
<g fill="#fff"><rect x="29" y="140" width="81" height="14"/><rect x="29" y="446" width="81" height="14"/></g>
<rect x="29" y="467" width="81" height="14" fill="#9eb5be"/><rect x="29" y="483" width="81" height="14" fill="#d3d3d3"/>

<g><use href="#cb" y="140"/><use href="#cb" y="156"/><use href="#cb" y="177"/><use href="#cb" y="198"/><use href="#cb" y="214"/><use href="#cb" y="235"/><use href="#cb" y="256"/><use href="#cb" y="272"/><use href="#cb" y="293"/><use href="#cb" y="314"/><use href="#cb" y="335"/><use href="#cb" y="356"/><use href="#cb" y="372"/><use href="#cb" y="393"/><use href="#cb" y="414"/><use href="#cb" y="430"/><use href="#cb" y="446"/><use href="#cb" y="467"/><use href="#cb" y="483"/>
<use href="#cb" y="504"/><use href="#cb" y="520"/><use href="#cb" y="536"/><use href="#cb" y="552"/><use href="#cb" y="568"/><use href="#cb" y="584"/><use href="#cb" y="600"/><use href="#cb" y="616"/><use href="#cb" y="632"/><use href="#cb" y="648"/><use href="#cb" y="664"/><use href="#cb" y="680"/><use href="#cb" y="696"/><use href="#cb" y="712"/><use href="#cb" y="728"/><use href="#cb" y="744"/><use href="#cb" y="760"/><use href="#cb" y="776"/><use href="#cb" y="792"/><use href="#cb" y="808"/><use href="#cb" y="824"/><use href="#cb" y="840"/><use href="#cb" y="856"/><use href="#cb" y="872"/><use href="#cb" y="888"/><use href="#cb" y="904"/><use href="#cb" y="920"/></g>
<rect x="-1" y="140.500" width="11" height="13" fill="none" stroke="#0000b0" stroke-width="2"/>

<g class="t">
<text x="30" y="151">to</text><text x="30" y="167" style="fill:#003a30">ts</text><text x="30" y="188">cs.etch</text><text x="30" y="209">cs</text><text x="29" y="225">pln2t</text><text x="30" y="246">sig3b.etch</text><text x="30" y="267">sig3b</text><text x="29" y="283">pln4t</text><text x="30" y="304">sig5b.etch</text><text x="30" y="325">sig5b</text><text x="30" y="346">sig6t.etch</text><text x="30" y="367">sig6t</text><text x="29" y="383">pln7b</text><text x="30" y="404">ss.etch</text><text x="30" y="425">ss</text><text x="30" y="441" style="fill:#003a30">bs</text><text x="30" y="457">bo</text><text x="30" y="478">drl</text><text x="30" y="494">rout</text>
<text x="30" y="515">cvia</text><text x="30" y="531">tp</text><text x="30" y="547">bp</text><text x="30" y="563">gko</text><text x="29" y="579">npth</text><text x="30" y="595">ydkdrl</text><text x="30" y="611">datecode-pt</text><text x="29" y="627">biaozhu</text><text x="30" y="643">dwk</text><text x="30" y="659">dwkby</text><text x="30" y="675">d</text><text x="30" y="691">to.d</text><text x="30" y="707">ts.d</text><text x="30" y="723">cs.d</text><text x="29" y="739">pln2t.d</text><text x="30" y="755">sig3b.d</text><text x="29" y="771">pln4t.d</text><text x="30" y="787">sig5b.d</text><text x="30" y="803">sig6t.d</text><text x="29" y="819">pln7b.d</text><text x="30" y="835">ss.d</text><text x="29" y="851">bs.d</text><text x="29" y="867">bo.d</text><text x="30" y="883">drl.d</text><text x="30" y="899">rout.d</text><text x="30" y="915">tp.d</text><text x="29" y="931">bo.d</text>
</g>
<use href="#hnd" x="94" y="143"/><use href="#hnd" x="101" y="201"/><use href="#hnd" x="101" y="417"/><use href="#hnd" x="101" y="683"/><use href="#hnd" x="101" y="715"/><use href="#hnd" x="101" y="827"/>
<path d="M104.500 144H109.500V149H104.500ZM107 144V149M104.500 146.500H109.500" fill="none" stroke="#000" stroke-width="1"/>
</g>

<rect x="0" y="928" width="141" height="2" fill="#3f8274"/>
<rect x="-2" y="934" width="142" height="18" fill="#fdc04f" stroke="#2f6f62"/>
<text class="j" x="-7" y="948" style="font-size:13px">Selected : 0</text>
<rect x="0" y="954" width="143" height="2" fill="#2f6f62"/>

<!-- right panels -->
<rect x="1744" y="58" width="166" height="409" fill="#3f7f72"/>
<rect x="1745" y="220" width="162" height="5" fill="#53a99a"/>
<rect x="1745" y="463" width="162" height="4" fill="#53a99a"/>
<use href="#bT" x="1747" y="61"/><use href="#iUp" x="1747" y="61"/>
<use href="#bT" x="1787" y="61"/><use href="#iDn" x="1787" y="61"/>
<use href="#bT" x="1827" y="61"/>
<g transform="translate(1827 61)" fill="none" stroke="#000" stroke-width="1.500"><path d="M7 19L19 7L31 19M10 17V31H28V17M14 21V31H19V21H14ZM22 21H26V26H22Z"/><path d="M25 11V5L28 4V13"/></g>
<use href="#bT" x="1867" y="61"/>
<g transform="translate(1867 61)" fill="none" stroke="#000" stroke-width="1.800"><path d="M7 7H31V31H7ZM7 23H31M20 7V31"/></g>
<text x="1890" y="83" style="font-family:'Liberation Sans',sans-serif;font-size:6px;fill:#222">XY</text>

<use href="#bT" x="1747" y="101"/><use href="#iLf" x="1747" y="101"/>
<use href="#bT" x="1787" y="101"/><use href="#iRt" x="1787" y="101"/>
<use href="#bT" x="1827" y="101"/>
<g transform="translate(1827 101)"><path fill="none" stroke="#000" stroke-width="2.400" d="M18 11H31V27H18Z"/><path fill="none" stroke="#000" stroke-width="2.400" d="M8 12Q15 12 15 19Q15 26 8 26"/><path class="b" d="M5 12L10 8V16Z"/></g>
<use href="#bT" x="1867" y="101"/>
<path transform="translate(1867 101)" fill="none" stroke="#000" stroke-width="2.200" d="M29 9H10V19H28V29H9M29 9L34 6M29 9L34 11M9 29L5 26M9 29L5 32"/>

<use href="#bT" x="1747" y="141"/><use href="#iFt" x="1747" y="141"/>
<use href="#bT" x="1787" y="141"/><use href="#iPn" x="1787" y="141"/>
<use href="#bT" x="1827" y="141"/>
<text x="1835" y="167" style="font-family:'Liberation Sans',sans-serif;font-weight:bold;font-size:18px;fill:#222" textLength="23" lengthAdjust="spacingAndGlyphs">1:2</text>
<use href="#bT" x="1867" y="141"/>
<path transform="translate(1867 141)" fill="none" stroke="#000" stroke-width="2" d="M7 7H31V31H7Z"/>
<text x="1881" y="170" style="font-family:'Liberation Sans',sans-serif;font-weight:bold;font-size:18px;fill:#222">?</text>

<use href="#bT" x="1747" y="181"/>
<g transform="translate(1747 181)"><path d="M6 9H26V13H6ZM26 7Q33 6 33 11Q33 16 26 15Z" fill="#000"/><path d="M6 18H24V21H6Z" fill="none" stroke="#000"/><path fill="none" stroke="#000" stroke-width="1.300" d="M16 24Q26 18 30 25Q30 32 20 34Q12 33 16 24ZM19 28H21M23 27H25"/></g>
<use href="#bT" x="1787" y="181"/>
<path transform="translate(1787 181)" fill="none" stroke="#8a9a9f" stroke-width="1" d="M5 5H33V33H5ZM15 5V33M24 5V33M5 15H33M5 24H33"/>
<use href="#bR" x="1827" y="181"/>
<g transform="translate(1827 181)"><path fill="none" stroke="#0a0acc" stroke-width="1.600" d="M16 10V25H12M6 17H16"/><circle cx="8" cy="18" r="2.600" fill="#e81010"/><circle cx="16" cy="9" r="2.600" fill="#0a0acc"/><circle cx="11" cy="28" r="2.600" fill="#0a0acc"/><rect x="21" y="7" width="9" height="25" fill="none" stroke="#222"/><circle cx="25.500" cy="11" r="3.500" fill="#e81010"/><circle cx="25.500" cy="19" r="2.800" fill="none" stroke="#222"/><circle cx="25.500" cy="26" r="2.800" fill="none" stroke="#222"/></g>
<use href="#bR" x="1867" y="181"/>
<g transform="translate(1867 181)"><path fill="none" stroke="#000" stroke-width="1.600" d="M16 10V25H12M6 17H16"/><circle cx="8" cy="18" r="2.600" fill="#000"/><circle cx="16" cy="9" r="2.600" fill="#000"/><circle cx="11" cy="28" r="2.600" fill="#000"/><path d="M12 13V18M15 13V18M18 13V18" stroke="#e81010"/><rect x="21" y="7" width="9" height="25" fill="none" stroke="#222"/><circle cx="25.500" cy="11" r="3.500" fill="#e81010"/><circle cx="25.500" cy="19" r="2.800" fill="none" stroke="#222"/><circle cx="25.500" cy="26" r="2.800" fill="none" stroke="#222"/></g>

<use href="#bW" x="1747" y="225"/>
<g transform="translate(1747 225)"><circle cx="18" cy="22" r="7" fill="#000"/><path d="M8 14H24V9M8 14V32H28V18" fill="none" stroke="#000" stroke-width="1.500"/><path d="M22 14L30 6M25 6H31V12" fill="none" stroke="#000" stroke-width="2.200"/></g>
<use href="#bW" x="1787" y="225"/>
<g transform="translate(1787 225)"><rect x="4" y="4" width="30" height="30" fill="#000"/><path d="M10 24L19 7M14 30L31 22" stroke="#fff" stroke-width="1"/><rect x="20" y="8" width="11" height="12" fill="#000" stroke="#e80000" stroke-width="2.400"/><rect x="6" y="24" width="8" height="8" fill="#000" stroke="#1a1ae0" stroke-width="2"/></g>
<use href="#bW" x="1827" y="225"/>
<g transform="translate(1827 225)"><rect x="7" y="14" width="24" height="9" fill="#000"/><path d="M8 14V18M10 14V16M12 14V18M14 14V16M16 14V18M18 14V16M20 14V18M22 14V16M24 14V18M26 14V16M28 14V18M30 14V16" stroke="#fff" stroke-width="1"/></g>
<use href="#bW" x="1867" y="225"/>
<g transform="translate(1867 225)"><rect x="7" y="7" width="24" height="24" fill="none" stroke="#000" stroke-width="1.200" stroke-dasharray="2 1.500"/><path d="M15 11H23L27 15V23L23 27H15L11 23V15Z" fill="#000"/></g>

<use href="#bG" x="1747" y="265"/>
<g transform="translate(1747 265)"><path d="M11 11V27H29" fill="none" stroke="#0a1ee0" stroke-width="3.500"/><circle cx="11" cy="11" r="4.500" fill="#0a1ee0"/><circle cx="11" cy="28" r="4.500" fill="#0a1ee0"/><circle cx="29" cy="28" r="4.500" fill="#0a1ee0"/><circle cx="27" cy="10" r="4.500" fill="#e80000"/></g>
<use href="#bG" x="1787" y="265"/>
<g transform="translate(1787 265)"><path d="M11 11L27 27M27 11L11 27" stroke="#000" stroke-width="2.200"/><circle cx="19" cy="19" r="5" fill="#0a0a90"/></g>
<use href="#bG" x="1827" y="265"/>
<g transform="translate(1827 265)"><circle cx="11" cy="27" r="3.500" fill="none" stroke="#0a1ee0" stroke-width="2"/><circle cx="27" cy="10" r="4.500" fill="#e80000"/><path d="M15 23L21 17M21 17H18M21 17V20" fill="none" stroke="#000"/></g>
<use href="#bG" x="1867" y="265"/>
<g transform="translate(1867 265)"><circle cx="11" cy="27" r="4.500" fill="#0a1ee0"/><circle cx="27" cy="10" r="4.500" fill="#e80000"/><path d="M15 23L21 17M21 17H18M21 17V20" fill="none" stroke="#000"/></g>

<use href="#bG" x="1747" y="305"/>
<g transform="translate(1747 305)"><path d="M9 26L25 9" stroke="#e80000" stroke-width="2.800"/><path d="M8 29H30" stroke="#0a1ee0" stroke-width="2.800"/><path d="M25 22L28 25M25 22H27M25 22V24" stroke="#333"/></g>
<use href="#bG" x="1787" y="305"/>
<g transform="translate(1787 305)"><path d="M28 9L19 19" stroke="#e80000" stroke-width="2.800"/><path d="M19 19L10 29" stroke="#0a1ee0" stroke-width="2.800"/><path d="M24 24L27 21M27 21H25M27 21V23" stroke="#333"/></g>
<use href="#bG" x="1827" y="305"/>
<path transform="translate(1827 305)" fill="none" stroke="#111" stroke-width="1.800" d="M16 10Q25 12 24 19Q23 27 13 27M16 24L12 27L16 30"/>
<use href="#bG" x="1867" y="305"/>
<g transform="translate(1867 305)" fill="none" stroke-width="2"><path stroke="#0a1ee0" d="M7 9H16V29M8 18H15M19 7V31"/><path stroke="#e80000" d="M31 9H23V29M23 18H30"/></g>

<use href="#bG" x="1747" y="345"/>
<g transform="translate(1747 345)"><rect x="7" y="22" width="11" height="11" fill="none" stroke="#0a1ee0"/><circle cx="12.500" cy="27.500" r="3.500" fill="#0a1ee0"/><rect x="22" y="6" width="10" height="11" fill="#fff" stroke="#e80000" stroke-width="2.500"/><path d="M18 22L21 19" stroke="#000"/></g>
<use href="#bG" x="1787" y="345"/>
<g transform="translate(1787 345)"><path d="M7 19H31" stroke="#e81010" stroke-width="3"/><path d="M15 19H23" stroke="#0a1ee0" stroke-width="3"/></g>
<use href="#bG" x="1827" y="345"/>
<g transform="translate(1827 345)" fill="none" stroke="#2a3ac8" stroke-width="1"><path d="M7 8V30M31 8V30" stroke="#111"/><path d="M8 19H14M24 19H30M8 19L11 17M8 19L11 21M30 19L27 17M30 19L27 21"/><rect x="14" y="13" width="10" height="12"/><path d="M20 15L17 20H21M20 17V23"/></g>
<use href="#bG" x="1867" y="345"/>
<g transform="translate(1867 345)"><path d="M8 8H22V14H30V31H14V22H8Z" fill="#0a1ee0"/><circle cx="14" cy="14" r="4" fill="#c8c8c8"/><circle cx="24" cy="25" r="5.500" fill="#c8c8c8"/></g>

<use href="#bG" x="1747" y="385"/>
<g transform="translate(1747 385)"><path d="M7 26L18 10L30 26Z" fill="none" stroke="#e80000" stroke-width="2.400"/><path d="M7 27H30" stroke="#0a1ee0" stroke-width="3"/><path d="M19 21V16M16 19L19 16L22 19" fill="none" stroke="#000"/></g>
<use href="#bG" x="1787" y="385"/>
<g transform="translate(1787 385)" fill="none"><path d="M9 30L19 5L29 30" stroke="#e80000" stroke-width="2.200"/><path d="M10 32L19 22L28 32" stroke="#0a1ee0" stroke-width="2.200"/><path d="M19 21V14M16 17L19 14L22 17" stroke="#000"/></g>
<use href="#bG" x="1827" y="385"/>
<g transform="translate(1827 385)" fill="none"><path d="M7 32L13 8H25L31 32" stroke="#e80000" stroke-width="3"/><path d="M6 29H32" stroke="#0a1ee0" stroke-width="3"/><path d="M19 20V13M16 16L19 13L22 16" stroke="#000"/></g>
<use href="#bG" x="1867" y="385"/>
<g transform="translate(1867 385)" fill="none"><path d="M9 30L14 10H25L29 30" stroke="#e80000" stroke-width="3"/><path d="M5 25H33" stroke="#0a1ee0" stroke-width="3"/><path d="M19 19V12M16 15L19 12L22 15M6 22L9 28M9 22L6 28M29 22L32 28M32 22L29 28" stroke="#000"/></g>

<use href="#bO" x="1747" y="425"/><use href="#ar" x="1747" y="425"/>
<use href="#bO" x="1787" y="425"/><rect x="1795" y="433" width="22" height="22" fill="none" stroke="#e80000" stroke-width="2.500"/><use href="#ar" x="1787" y="425"/>
<use href="#bO" x="1827" y="425"/><path d="M1841 433H1855L1860 438V455H1841L1835 447V439Z" fill="none" stroke="#e80000" stroke-width="2.500"/><use href="#ar" x="1827" y="425"/>
<use href="#bO" x="1867" y="425"/>
<g transform="translate(1867 425)"><path d="M9 15V24H14V14H24" fill="none" stroke="#000" stroke-width="1.300"/><path d="M9 25V30" stroke="#000"/><circle cx="10" cy="19" r="2" fill="#e80000"/><circle cx="9" cy="29" r="2.200" fill="#00d020" stroke="#000" stroke-width=".5"/><circle cx="27" cy="9" r="2.200" fill="#00d020" stroke="#000" stroke-width=".5"/><path d="M24 12V14" stroke="#000"/><path class="b" d="M19 15L30 27H27L31 33L28 35L24 28L20 31Z"/></g>

<!-- minimap area -->
<rect x="1745" y="467" width="1.600" height="445" fill="#357565"/>
<rect x="1907" y="467" width="1.500" height="445" fill="#9fb0b0"/><rect x="1908.500" y="58" width="1.500" height="932" fill="#8fa6a6"/>
<rect x="1746.500" y="622.500" width="161" height="133" fill="none" stroke="#0a1a90" stroke-width="1"/>
<rect x="1746" y="635" width="66" height="36" fill="#f80000"/><rect x="1746" y="635" width="8" height="36" fill="#ee2060"/>
<path d="M1754 636H1885.500V741.500H1754Z" fill="none" stroke="#fff" stroke-width="2"/>
<path d="M1754 635.500H1812" stroke="#30e0e0" stroke-width="1.500"/><path d="M1754 636V671" stroke="#b8b8b8" stroke-width="2"/>
<path d="M1751 739L1757 746M1757 739L1751 746" stroke="#fff" stroke-width="1"/>
<rect x="1745" y="910" width="165" height="2" fill="#b8e8dc"/>
<rect x="1745" y="912" width="162" height="44" fill="#53ccb0"/>
<rect x="1745" y="955" width="165" height="2" fill="#000"/>
<text class="j" x="1749" y="930" style="font-weight:normal;stroke:#222;stroke-width:.4;fill:#222;font-size:13px" textLength="117" lengthAdjust="spacing">X = 0.285818"</text>
<text class="j" x="1749" y="945" style="font-weight:normal;stroke:#222;stroke-width:.4;fill:#222;font-size:13px" textLength="117" lengthAdjust="spacing">Y = 6.120050"</text>

<!-- bottom bar -->
<rect y="957" width="1910" height="33" fill="#fefbcd"/>
<rect y="990" width="1910" height="3" fill="#5a7f80"/>
<rect x="0" y="957" width="21" height="33" fill="#d8d8c0"/><rect x="-6" y="960" width="23" height="26" fill="#fefbcd" stroke="#444"/>
<path d="M0 962L12 975M12 968V975H5" fill="none" stroke="#333" stroke-width="1.200"/>
<rect x="22" y="958" width="30" height="31" fill="#c8c8a8"/><rect x="27" y="963" width="21" height="22" fill="#fefbcd" stroke="#444"/>
<path d="M30 981L44 966M30 981H46M38 972V976M40 978H44" fill="none" stroke="#333" stroke-width="1.200"/>
<rect x="54" y="957" width="29" height="33" fill="#53ccb0"/><rect x="58" y="961" width="22" height="25" fill="#fefbcd"/>
<path d="M61 975L70 965H75V983H61ZM61 975H75M68 966V983" fill="none" stroke="#333" stroke-width="1.200"/>
<text class="j" x="85" y="977" style="font-size:14px;letter-spacing:.5px">X Y :</text>
<rect x="131" y="957" width="172" height="33" fill="#fefbcd" stroke="#53ccb0" stroke-width="0"/>
<rect x="134" y="961" width="166" height="26" fill="#fefbcd" stroke="#c4c49c" stroke-width="3"/>
<path d="M139 962H142M140.500 962V984M139 984H142" stroke="#444" stroke-width="1" stroke-dasharray="1 1"/>
<rect x="304" y="957" width="31" height="33" fill="#53ccb0"/><rect x="308" y="961" width="24" height="25" fill="#fefbcd"/>
<rect x="312" y="964" width="15" height="19" fill="none" stroke="#222" stroke-width="1.200"/><path d="M319.500 967V977M319.500 979V981" stroke="#111" stroke-width="1.800"/>
<rect x="336" y="957" width="1" height="33" fill="#7fa8a0"/>
<text class="t" x="340" y="977">&lt;M1&gt; - Select first area corner</text>
<rect x="1828" y="957" width="82" height="33" fill="#2f6f62"/>
<rect x="1830" y="959" width="76" height="30" fill="#53ccb0"/>
<rect x="1835" y="961" width="68" height="26" fill="#53ccb0"/><path d="M1835 987V961H1903" fill="none" stroke="#a8ecdc" stroke-width="1.500"/><path d="M1835 987H1903V961" fill="none" stroke="#2f7a6a" stroke-width="1.500"/>
<text class="j" x="1841" y="979" style="font-size:14.500px;font-family:'Liberation Serif',serif;letter-spacing:1px">Inch</text>
<rect x="1885" y="970" width="12" height="6" fill="#9ddbdb" stroke="#2f6f62"/>
</svg>
</body></html>
